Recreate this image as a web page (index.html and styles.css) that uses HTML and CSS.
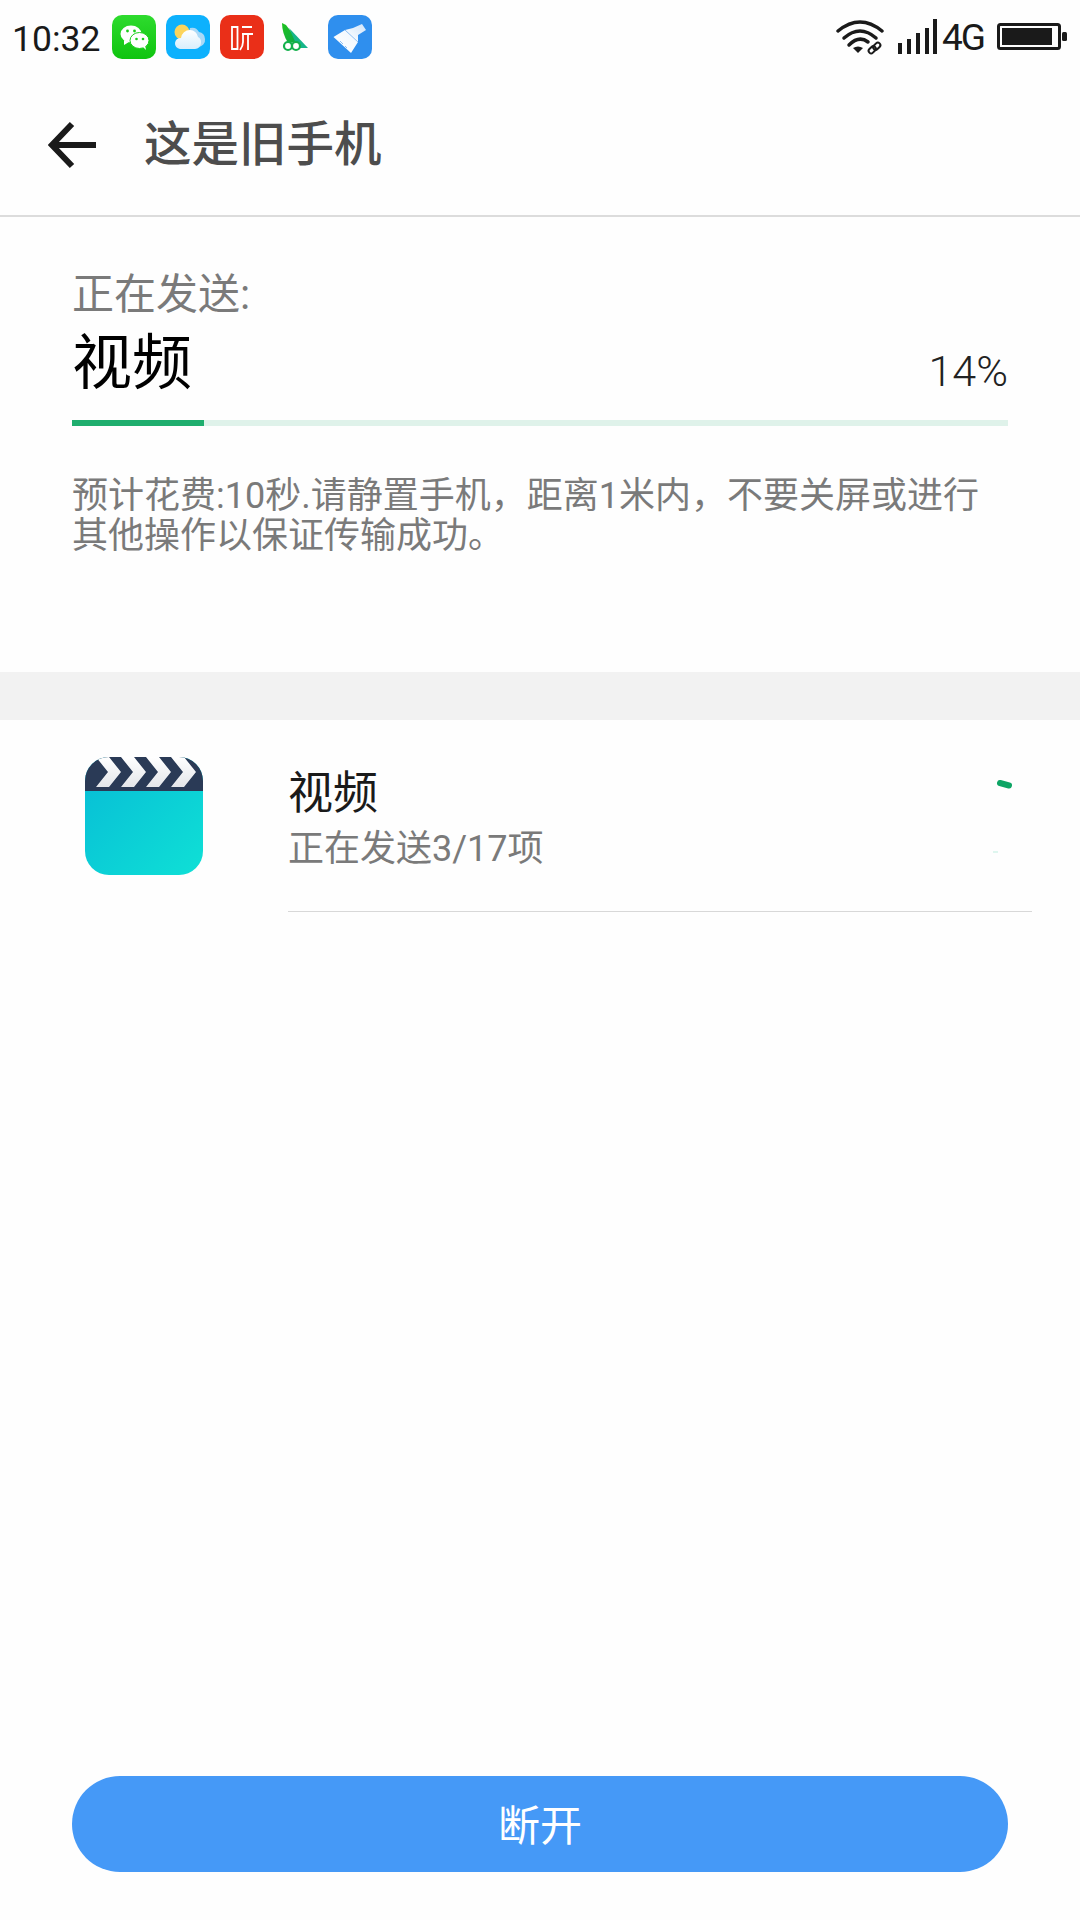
FILE: index.html
```html
<!DOCTYPE html>
<html lang="zh-CN">
<head>
<meta charset="utf-8">
<title>这是旧手机</title>
<link rel="stylesheet" href="styles.css">
</head>
<body>
<div class="screen">
  <div class="status">
    <span class="time">10:32</span>
    <div class="apps">
      <svg class="app" viewBox="0 0 44 44"><defs><linearGradient id="wg" x1="0" y1="0" x2="0" y2="1"><stop offset="0" stop-color="#2edb2e"/><stop offset="1" stop-color="#0fc40f"/></linearGradient></defs><rect width="44" height="44" rx="10" fill="url(#wg)"/><ellipse cx="19" cy="19" rx="10.500" ry="8.500" fill="#fff"/><path d="M12 25l0 5 5-3z" fill="#fff"/><ellipse cx="27.500" cy="25.500" rx="9.500" ry="8" fill="#fff" stroke="#1bcf1b" stroke-width="1"/><path d="M31 32l3 3-1-5z" fill="#fff"/><circle cx="15.500" cy="16" r="1.400" fill="#1bcf1b"/><circle cx="22.500" cy="16" r="1.400" fill="#1bcf1b"/><circle cx="24.500" cy="24" r="1.300" fill="#1bcf1b"/><circle cx="31" cy="24" r="1.300" fill="#1bcf1b"/></svg>
      <svg class="app" viewBox="0 0 44 44"><defs><linearGradient id="cl" x1="0" y1="0" x2="0" y2="1"><stop offset="0" stop-color="#fff"/><stop offset="1" stop-color="#d8eefc"/></linearGradient></defs><rect width="44" height="44" rx="10" fill="#0db1fd"/><circle cx="16" cy="17" r="7.500" fill="#fcd45c"/><path d="M24 13a8 8 0 0 1 9 4 7 7 0 0 1 6 7 7 7 0 0 1-7 8H20z" fill="#a9d9f7"/><path d="M14 34a5.500 5.500 0 0 1-5-6 6 6 0 0 1 6-5 9 9 0 0 1 9-8 8.500 8.500 0 0 1 8 7 6 6 0 0 1 3 6 6 6 0 0 1-6 6z" fill="url(#cl)"/></svg>
      <svg class="app" viewBox="0 0 44 44"><rect width="44" height="44" rx="10" fill="#ea2f18"/><g fill="none" stroke="#fff" stroke-width="1.800"><path d="M12 12h5.500v22H12z"/><path d="M22 12h10M22 19h11M23 19v8q0 4-3 8M28 19v16"/></g></svg>
      <svg class="app" viewBox="0 0 44 44"><defs><linearGradient id="lf" x1="0" y1="0" x2="1" y2="1"><stop offset="0" stop-color="#1ec21e"/><stop offset="1" stop-color="#0fa84a"/></linearGradient></defs><path d="M8 8l4 2 13 17-11 1Q8 18 8 8z" fill="url(#lf)"/><path d="M15 13l19 20H24z" fill="#16b58a"/><circle cx="14" cy="31" r="4" fill="#fff" stroke="#14b04c" stroke-width="2.200"/><circle cx="22" cy="31" r="4" fill="#fff" stroke="#14b04c" stroke-width="2.200"/></svg>
      <svg class="app" viewBox="0 0 44 44"><defs><linearGradient id="br" x1="0" y1="1" x2="1" y2="0"><stop offset="0" stop-color="#fff"/><stop offset=".55" stop-color="#f4f9fe"/><stop offset="1" stop-color="#cfe4fa"/></linearGradient></defs><rect width="44" height="44" rx="10" fill="#2f8fee"/><path d="M5.500 22L17 15l8-2 9-4 4 6-8 5v7l-7 11z" fill="url(#br)"/><path d="M17 15l13 12M12 26l3 3M17 31l2 2" fill="none" stroke="#8fc0f4" stroke-width="1"/></svg>
    </div>
    <div class="indicators">
      <svg class="wifi" viewBox="0 0 48 36"><g fill="none" stroke="#1a1a1a" stroke-width="3.500" stroke-linecap="round"><path d="M2 12Q24-6 46 12"/><path d="M8 19Q24 5 40 19"/><path d="M13 26Q23 16 32 23"/></g><path d="M17 29q5-3 10 0l-5 5z" fill="#1a1a1a"/><g fill="none" stroke="#1a1a1a" stroke-width="2"><rect x="-2.500" y="-6.500" width="5" height="8" rx="2.500" transform="translate(39 29) rotate(45)"/><rect x="-2.500" y="-1.500" width="5" height="8" rx="2.500" transform="translate(38 29) rotate(45)"/></g></svg>
      <svg class="signal" viewBox="0 0 40 36"><g fill="#1a1a1a"><rect x="0" y="24" width="4" height="11"/><rect x="9" y="20" width="4" height="15"/><rect x="18" y="14" width="4" height="21"/><rect x="27" y="9" width="4" height="26"/><rect x="35" y="0" width="4" height="35"/></g></svg>
      <span class="net">4G</span>
      <svg class="battery" viewBox="0 0 70 28"><rect x="1.500" y="1.500" width="61" height="24" rx="2" fill="none" stroke="#1a1a1a" stroke-width="3"/><rect x="5" y="5" width="50" height="17" fill="#1a1a1a"/><rect x="65" y="9" width="5" height="9" rx="1.500" fill="#1a1a1a"/></svg>
    </div>
  </div>

  <header class="bar">
    <svg class="back" viewBox="0 0 48 48"><path d="M48 24H4M24 3L4 24l20 21" fill="none" stroke="#1a1a1a" stroke-width="6"/></svg>
    <h1 class="title">这是旧手机</h1>
  </header>

  <section class="progress-panel">
    <div class="label">正在发送:</div>
    <div class="current">
      <span class="name">视频</span>
      <span class="pct">14%</span>
    </div>
    <div class="track"><div class="fill" style="width:14.100%"></div></div>
    <p class="note">预计花费:10秒.请静置手机，距离1米内，不要关屏或进行其他操作以保证传输成功。</p>
  </section>

  <div class="band"></div>

  <section class="item">
    <svg class="clap" viewBox="0 0 118 118"><defs><linearGradient id="tl" x1="0" y1="0" x2="1" y2="1"><stop offset="0" stop-color="#07bcd6"/><stop offset="1" stop-color="#0fe0d6"/></linearGradient><linearGradient id="wh" x1="0" y1="0" x2="0" y2="1"><stop offset="0" stop-color="#fff"/><stop offset="1" stop-color="#e4e6ea"/></linearGradient><clipPath id="sq"><rect width="118" height="118" rx="24"/></clipPath></defs><g clip-path="url(#sq)"><rect width="118" height="118" fill="url(#tl)"/><rect width="118" height="34" fill="#2a3a56"/><g fill="url(#wh)"><path d="M11 0h13l12 15-12 15H11l12-15z"/><path d="M36 0h13l12 15-12 15H36l12-15z"/><path d="M61 0h13l12 15-12 15H61l12-15z"/><path d="M86 0h13l12 15-12 15H86l12-15z"/></g></g></svg>
    <div class="item-body">
      <div class="item-title">视频</div>
      <div class="item-sub">正在发送3/17项</div>
      <svg class="spin" viewBox="0 0 20 90"><path d="M4 3l9 2.500" stroke="#0ea565" stroke-width="6" stroke-linecap="round"/><path d="M-3 72h5" stroke="#bfeee0" stroke-width="1"/></svg>
    </div>
  </section>

  <div class="spacer"></div>

  <div class="action"><button class="disconnect">断开</button></div>
</div>
</body>
</html>
```

FILE: styles.css
```css
* { box-sizing: border-box; }
html, body { margin: 0; padding: 0; background: #fff; }
body { font-family: "Roboto", "Noto Sans CJK SC", sans-serif; }
.screen { width: 1080px; height: 1920px; display: flex; flex-direction: column; background: #fefefe; overflow: hidden; }

.status { height: 74px; display: flex; align-items: center; padding: 0 13px 0 12px; flex: none; }
.time { font-size: 35.500px; color: #1a1a1a; width: 100px; flex: none; padding-top: 3px; }
.apps { display: flex; gap: 10px; }
.app { width: 44px; height: 44px; display: block; }
.indicators { margin-left: auto; display: flex; align-items: center; }
.wifi { width: 48px; height: 36px; display: block; margin-right: 14px; }
.signal { width: 40px; height: 36px; display: block; margin-right: 4px; }
.net { font-size: 37px; font-weight: 400; color: #1a1a1a; letter-spacing: -2px; width: 55px; }
.battery { width: 70px; height: 28px; display: block; }

.bar { height: 143px; display: flex; align-items: center; padding: 0 0 0 48px; border-bottom: 2px solid #dcdcdc; flex: none; }
.back { width: 48px; height: 48px; display: block; }
.title { margin: 3px 0 0 48px; font-size: 47.500px; font-weight: 500; color: #4d4d4d; line-height: 1; }

.progress-panel { height: 455px; padding: 53px 72px 0; flex: none; }
.label { font-size: 42px; line-height: 50px; color: #7a7a7a; }
.current { display: flex; justify-content: space-between; align-items: flex-end; height: 74px; margin-top: 7px; }
.name { font-size: 60px; line-height: 74px; color: #000; }
.pct { font-size: 43px; font-weight: 300; color: #222; line-height: 60px; }
.track { height: 6px; margin-top: 19px; background: #dff2ea; }
.fill { height: 100%; background: #1fae6e; }
.note { margin: 50px 0 0; font-size: 36px; line-height: 40px; color: #7a7a7a; width: 920px; }

.band { height: 48px; background: #f2f2f2; flex: none; }

.item { display: flex; padding-left: 85px; flex: none; height: 192px; }
.clap { width: 118px; height: 118px; display: block; margin-top: 37px; flex: none; }
.item-body { margin-left: 85px; width: 744px; height: 192px; border-bottom: 1px solid #d8d8d8; position: relative; padding-top: 47px; }
.item-title { font-size: 45px; line-height: 54px; color: #1a1a1a; }
.item-sub { font-size: 36px; line-height: 48px; color: #7a7a7a; margin-top: 4px; }
.spin { position: absolute; left: 708px; top: 60px; width: 20px; height: 90px; overflow: visible; }

.spacer { flex: 1; }
.action { padding: 0 72px 48px; flex: none; }
.disconnect { display: block; width: 100%; height: 96px; padding: 0 0 4px; border: 0; border-radius: 48px; background: #4599f7; color: #fff; font: 42px "Roboto", "Noto Sans CJK SC", sans-serif; }
```
